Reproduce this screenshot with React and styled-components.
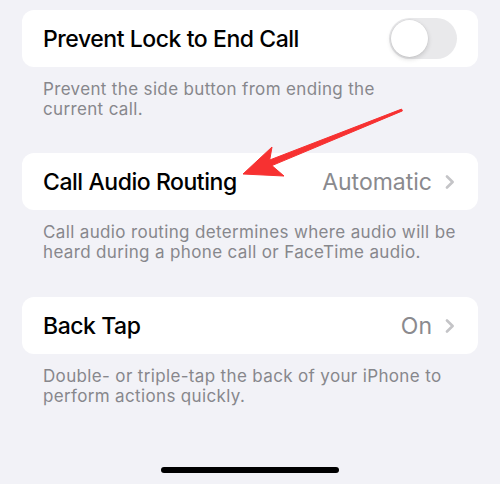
import React from "react";
import styled, { createGlobalStyle } from "styled-components";

const GlobalStyle = createGlobalStyle`
  html, body {
    margin: 0;
    padding: 0;
    background: #f2f2f7;
  }
  body {
    font-family: Inter, "Noto Sans", "Liberation Sans", sans-serif;
    -webkit-font-smoothing: antialiased;
  }
  * { box-sizing: border-box; }
`;

const Page = styled.div`
  position: relative;
  width: 500px;
  height: 484px;
  overflow: hidden;
  background: #f2f2f7;
  padding: 10px 22px 0;
  display: flex;
  flex-direction: column;
`;

const Section = styled.section`
  display: flex;
  flex-direction: column;
`;

const Card = styled.div`
  background: #ffffff;
  border-radius: 12px;
  height: 57px;
  display: flex;
  align-items: center;
  justify-content: space-between;
  padding: 0 21px;
`;

const Title = styled.span`
  font-size: 23px;
  font-weight: 500;
  color: #000;
  letter-spacing: -0.45px;
`;

const Accessory = styled.div`
  display: flex;
  align-items: center;
  gap: 13px;
  padding-right: 2px;
`;

const Value = styled.span`
  font-size: 23px;
  font-weight: 400;
  color: #8a8a8e;
`;

const Footer = styled.p`
  margin: 0;
  padding: 12px 21px ${(p) => p.$bottom}px;
  font-size: 17px;
  line-height: 20px;
  letter-spacing: 0.35px;
  color: #87878c;
`;

const Toggle = styled.div`
  width: 68px;
  height: 41px;
  border-radius: 21px;
  background: #e9e9eb;
  padding: 2px;
  display: flex;
  align-items: center;
  justify-content: ${(p) => (p.$on ? "flex-end" : "flex-start")};
`;

const Knob = styled.div`
  width: 37px;
  height: 37px;
  border-radius: 50%;
  background: #fff;
  box-shadow: 0 2px 5px rgba(0, 0, 0, 0.16), 0 0 0 0.5px rgba(0, 0, 0, 0.05);
`;

const HomeIndicator = styled.div`
  width: 178px;
  height: 6px;
  border-radius: 3px;
  background: #000;
  margin: auto auto 11px;
`;

const Overlay = styled.svg`
  position: absolute;
  left: 0;
  top: 0;
  pointer-events: none;
`;

const Chevron = () => (
  <svg width="10" height="14" viewBox="0 0 10 14">
    <path
      d="M2 1.5 L7.6 7 L2 12.5"
      fill="none"
      stroke="#c4c4c7"
      strokeWidth="2.6"
      strokeLinecap="round"
      strokeLinejoin="round"
    />
  </svg>
);

const Row = ({ title, value, toggle }) => (
  <Card>
    <Title>{title}</Title>
    {toggle ? (
      <Toggle $on={false}>
        <Knob />
      </Toggle>
    ) : (
      <Accessory>
        <Value>{value}</Value>
        <Chevron />
      </Accessory>
    )}
  </Card>
);

export default function App() {
  return (
    <>
      <GlobalStyle />
      <Page>
        <Section>
          <Row title="Prevent Lock to End Call" toggle />
          <Footer $bottom={34}>
            Prevent the side button from ending the
            <br />
            current call.
          </Footer>
        </Section>
        <Section>
          <Row title="Call Audio Routing" value="Automatic" />
          <Footer $bottom={35}>
            Call audio routing determines where audio will be
            <br />
            heard during a phone call or FaceTime audio.
          </Footer>
        </Section>
        <Section>
          <Row title="Back Tap" value="On" />
          <Footer $bottom={0}>
            Double- or triple-tap the back of your iPhone to
            <br />
            perform actions quickly.
          </Footer>
        </Section>
        <HomeIndicator />
        <Overlay width="500" height="484" viewBox="0 0 500 484">
          <polygon
            points="401.6,109.1 269.7,160.0 272,147 243,174 284,176 271.9,165.6 402.4,110.9"
            fill="#f73131"
            stroke="#f73131"
            strokeWidth="1"
            strokeLinejoin="round"
          />
        </Overlay>
      </Page>
    </>
  );
}
